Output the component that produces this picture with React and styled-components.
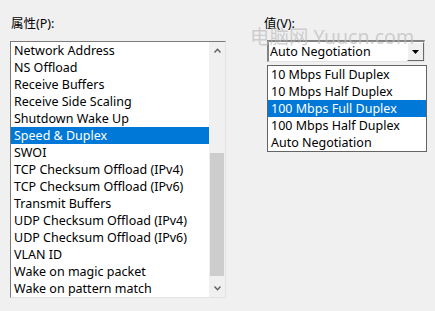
import styled, { createGlobalStyle } from "styled-components";

const Global = createGlobalStyle`
  html, body {
    margin: 0;
    padding: 0;
    background: #f0f0f0;
  }
  body {
    font-family: "Noto Sans", "Noto Sans CJK SC", sans-serif;
    font-size: 12.5px;
    color: #000;
  }
`;

const properties = [
  "Network Address",
  "NS Offload",
  "Receive Buffers",
  "Receive Side Scaling",
  "Shutdown Wake Up",
  "Speed & Duplex",
  "SWOI",
  "TCP Checksum Offload (IPv4)",
  "TCP Checksum Offload (IPv6)",
  "Transmit Buffers",
  "UDP Checksum Offload (IPv4)",
  "UDP Checksum Offload (IPv6)",
  "VLAN ID",
  "Wake on magic packet",
  "Wake on pattern match",
];

const values = [
  "10 Mbps Full Duplex",
  "10 Mbps Half Duplex",
  "100 Mbps Full Duplex",
  "100 Mbps Half Duplex",
  "Auto Negotiation",
];

const App = () => {
  return (
    <Page>
      <Global />
      <Column>
        <Label>属性(P):</Label>
        <ListBox>
          <Items>
            {properties.map((p) => (
              <Row key={p} $selected={p === "Speed & Duplex"}>
                {p}
              </Row>
            ))}
          </Items>
          <ScrollBar>
            <Arrow>
              <svg width="7" height="5" viewBox="0 0 7 5">
                <path d="M0.5 4.5 L3.5 1.2 L6.5 4.5" fill="none" stroke="#606060" strokeWidth="1.4" />
              </svg>
            </Arrow>
            <Track>
              <Thumb />
            </Track>
            <Arrow>
              <svg width="7" height="5" viewBox="0 0 7 5">
                <path d="M0.5 0.5 L3.5 3.8 L6.5 0.5" fill="none" stroke="#606060" strokeWidth="1.4" />
              </svg>
            </Arrow>
          </ScrollBar>
        </ListBox>
      </Column>

      <ValueColumn>
        <Label>值(V):</Label>
        <Watermark>电脑网 Yuucn.com</Watermark>
        <Combo>
          <ComboText>Auto Negotiation</ComboText>
          <DropButton>
            <svg width="7" height="4" viewBox="0 0 7 4">
              <path d="M0 0 H7 L3.5 4 Z" fill="#000" />
            </svg>
          </DropButton>
        </Combo>
        <DropList>
          {values.map((v) => (
            <Row key={v} $selected={v === "100 Mbps Full Duplex"}>
              {v}
            </Row>
          ))}
        </DropList>
      </ValueColumn>
    </Page>
  );
};

const Page = styled.div`
  position: relative;
  width: 435px;
  height: 311px;
  display: flex;
  align-items: flex-start;
  padding: 16px 0 0 10px;
  box-sizing: border-box;
`;

const Column = styled.div`
  display: flex;
  flex-direction: column;
`;

const ValueColumn = styled.div`
  position: relative;
  display: flex;
  flex-direction: column;
  margin-left: 37px;
`;

const Label = styled.div`
  height: 16px;
  line-height: 16px;
  padding-left: 1px;
  margin-bottom: 9px;
`;

const Watermark = styled.div`
  position: absolute;
  left: -13px;
  top: 10px;
  font-size: 19.5px;
  line-height: 22px;
  color: rgba(185, 185, 185, 0.65);
  white-space: nowrap;
  pointer-events: none;
`;

const ListBox = styled.div`
  display: flex;
  width: 216px;
  height: 257px;
  box-sizing: border-box;
  border-top: 1px solid #7a7a7a;
  border-left: 1px solid #7a7a7a;
  border-right: 1px solid #e3e3e3;
  border-bottom: 1px solid #e3e3e3;
  background: #fff;
`;

const Items = styled.div`
  flex: 1;
  display: flex;
  flex-direction: column;
`;

const Row = styled.div`
  height: 17px;
  line-height: 17px;
  padding-left: 3px;
  white-space: nowrap;
  background: ${(p) => (p.$selected ? "#0078d7" : "transparent")};
  color: ${(p) => (p.$selected ? "#fff" : "#000")};
`;

const ScrollBar = styled.div`
  width: 16px;
  display: flex;
  flex-direction: column;
  background: #f0f0f0;
`;

const Arrow = styled.div`
  height: 17px;
  display: flex;
  align-items: center;
  justify-content: center;
`;

const Track = styled.div`
  flex: 1;
  display: flex;
  flex-direction: column;
  justify-content: flex-end;
  padding: 0 1px 4px;
`;

const Thumb = styled.div`
  height: 123px;
  background: #cdcdcd;
`;

const Combo = styled.div`
  display: flex;
  align-items: stretch;
  width: 158px;
  height: 22px;
  margin-left: 4px;
  margin-top: -1px;
  box-sizing: border-box;
  border-top: 2px solid #828282;
  border-left: 2px solid #828282;
  border-right: 1px solid #e3e3e3;
  border-bottom: 1px solid #e3e3e3;
  background: #fff;
`;

const ComboText = styled.div`
  flex: 1;
  line-height: 19px;
  padding-left: 1px;
  white-space: nowrap;
`;

const DropButton = styled.div`
  width: 17px;
  display: flex;
  align-items: center;
  justify-content: center;
  background: #f0f0f0;
  box-sizing: border-box;
  border-top: 1px solid #fff;
  border-left: 1px solid #fff;
  border-right: 1px solid #696969;
  border-bottom: 1px solid #696969;
`;

const DropList = styled.div`
  width: 160px;
  margin-left: 4px;
  margin-top: 3px;
  box-sizing: border-box;
  border: 1px solid #646464;
  background: #fff;
`;

export default App;
